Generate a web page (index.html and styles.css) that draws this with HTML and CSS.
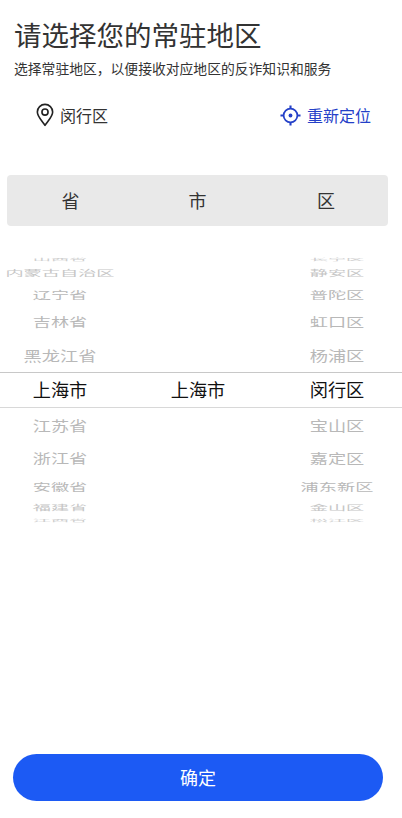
FILE: index.html
```html
<!DOCTYPE html>
<html lang="zh-CN">
<head>
    <meta charset="UTF-8">
    <meta name="viewport" content="width=device-width, initial-scale=1.0">
    <title>请选择您的常驻地区</title>
    <link rel="stylesheet" href="styles.css">
</head>
<body>
    <div class="page">
        <h1 class="title">请选择您的常驻地区</h1>
        <p class="subtitle">选择常驻地区，以便接收对应地区的反诈知识和服务</p>

        <div class="location">
            <div class="current">
                <svg class="pin-icon" viewBox="0 0 20 26" width="18" height="24" fill="none" stroke="#222" stroke-width="1.8">
                    <path d="M10 24.5 C7.5 20.5 1.5 15 1.5 9.7 A8.5 8.5 0 0 1 18.5 9.7 C18.5 15 12.5 20.5 10 24.5 Z" stroke-linejoin="round"/>
                    <circle cx="10" cy="9.7" r="3.4"/>
                </svg>
                <span>闵行区</span>
            </div>
            <div class="relocate">
                <svg class="locate-icon" viewBox="0 0 22 22" width="21" height="21" fill="none" stroke="#2440c8" stroke-width="1.8">
                    <circle cx="11" cy="11" r="7.2"/>
                    <circle cx="11" cy="11" r="2" fill="#2440c8" stroke="none"/>
                    <path d="M11 0.5 V4 M11 18 V21.5 M0.5 11 H4 M18 11 H21.5" stroke-width="2.2"/>
                </svg>
                <span>重新定位</span>
            </div>
        </div>

        <div class="tabs">
            <span>省</span>
            <span>市</span>
            <span>区</span>
        </div>

        <!-- picker rows, squashed towards the edges like a wheel -->
        <div class="wheel">
            <div class="row depth-t5"><span>山西省</span><span></span><span>长宁区</span></div>
            <div class="row depth-t4"><span>内蒙古自治区</span><span></span><span>静安区</span></div>
            <div class="row depth-t3"><span>辽宁省</span><span></span><span>普陀区</span></div>
            <div class="row depth-t2"><span>吉林省</span><span></span><span>虹口区</span></div>
            <div class="row depth-t1"><span>黑龙江省</span><span></span><span>杨浦区</span></div>
            <div class="row selected"><span>上海市</span><span>上海市</span><span>闵行区</span></div>
            <div class="row depth-b1"><span>江苏省</span><span></span><span>宝山区</span></div>
            <div class="row depth-b2"><span>浙江省</span><span></span><span>嘉定区</span></div>
            <div class="row depth-b3"><span>安徽省</span><span></span><span>浦东新区</span></div>
            <div class="row depth-b4"><span>福建省</span><span></span><span>金山区</span></div>
            <div class="row depth-b5"><span>江西省</span><span></span><span>松江区</span></div>
        </div>

        <button class="confirm" type="button">确定</button>
    </div>
</body>
</html>
```

FILE: styles.css
```css
body {
    margin: 0;
    background: #fff;
    font-family: "Noto Sans CJK SC", "Noto Sans", sans-serif;
    color: #333;
}

.page {
    display: flex;
    flex-direction: column;
    box-sizing: border-box;
    height: 818px;
    padding: 16px 0 17px;
    overflow: hidden;
}

.title {
    margin: 0 0 0 14px;
    font-size: 27.5px;
    font-weight: 400;
    line-height: 36px;
    white-space: nowrap;
}

.subtitle {
    margin: 6px 0 0 14px;
    font-size: 13.8px;
    line-height: 20px;
    white-space: nowrap;
}

.location {
    display: flex;
    justify-content: space-between;
    align-items: center;
    height: 30px;
    margin-top: 22px;
    padding: 0 31px 0 36px;
    font-size: 16px;
}

.current,
.relocate {
    display: flex;
    align-items: center;
    gap: 6px;
}

.relocate {
    color: #2440c8;
}

.tabs {
    display: grid;
    grid-template-columns: 127px 127px 1fr;
    align-items: center;
    box-sizing: border-box;
    height: 51px;
    margin: 45px 14px 0 7px;
    padding: 0 0 2px;
    background: #e9e9e9;
    border-radius: 4px;
    font-size: 18px;
    text-align: center;
}

.tabs span:last-child {
    padding-left: 3px;
}

.wheel {
    height: 272px;
    margin-top: 29px;
    overflow: hidden;
}

.row {
    display: grid;
    grid-template-columns: 120px 156px 122px;
    font-size: 18.2px;
    color: #b8b8b8;
    text-align: center;
    white-space: nowrap;
}

.row span {
    display: block;
    line-height: inherit;
}

.selected {
    box-sizing: border-box;
    height: 36px;
    line-height: 32px;
    border-top: 1px solid #c8c8c8;
    border-bottom: 1px solid #d8d8d8;
    color: #111;
}

.depth-t5 { height: 9px; line-height: 9px; color: #cdcdcd; }
.depth-t5 span { transform: scaleY(0.2); }
.depth-t4 { height: 18px; line-height: 18px; color: #c6c6c6; }
.depth-t4 span { transform: scaleY(0.42); }
.depth-t3 { height: 25px; line-height: 25px; }
.depth-t3 span { transform: scaleY(0.55); }
.depth-t2 { height: 31px; line-height: 31px; }
.depth-t2 span { transform: scaleY(0.66); }
.depth-t1 { height: 34px; line-height: 34px; }
.depth-t1 span { transform: scaleY(0.76); }

.depth-b1 { height: 34px; line-height: 34px; }
.depth-b1 span { transform: scaleY(0.76); }
.depth-b2 { height: 30px; line-height: 30px; }
.depth-b2 span { transform: scaleY(0.7); }
.depth-b3 { height: 28px; line-height: 28px; }
.depth-b3 span { transform: scaleY(0.58); }
.depth-b4 { height: 14px; line-height: 14px; color: #c6c6c6; }
.depth-b4 span { transform: scaleY(0.36); }
.depth-b5 { height: 13px; line-height: 13px; color: #cdcdcd; }
.depth-b5 span { transform: scaleY(0.18); }

.confirm {
    height: 47px;
    margin: auto 19px 0 13px;
    padding: 0 0 2px;
    border: none;
    border-radius: 24px;
    background: #1c5af4;
    color: #fff;
    font-family: inherit;
    font-size: 18px;
}
```
